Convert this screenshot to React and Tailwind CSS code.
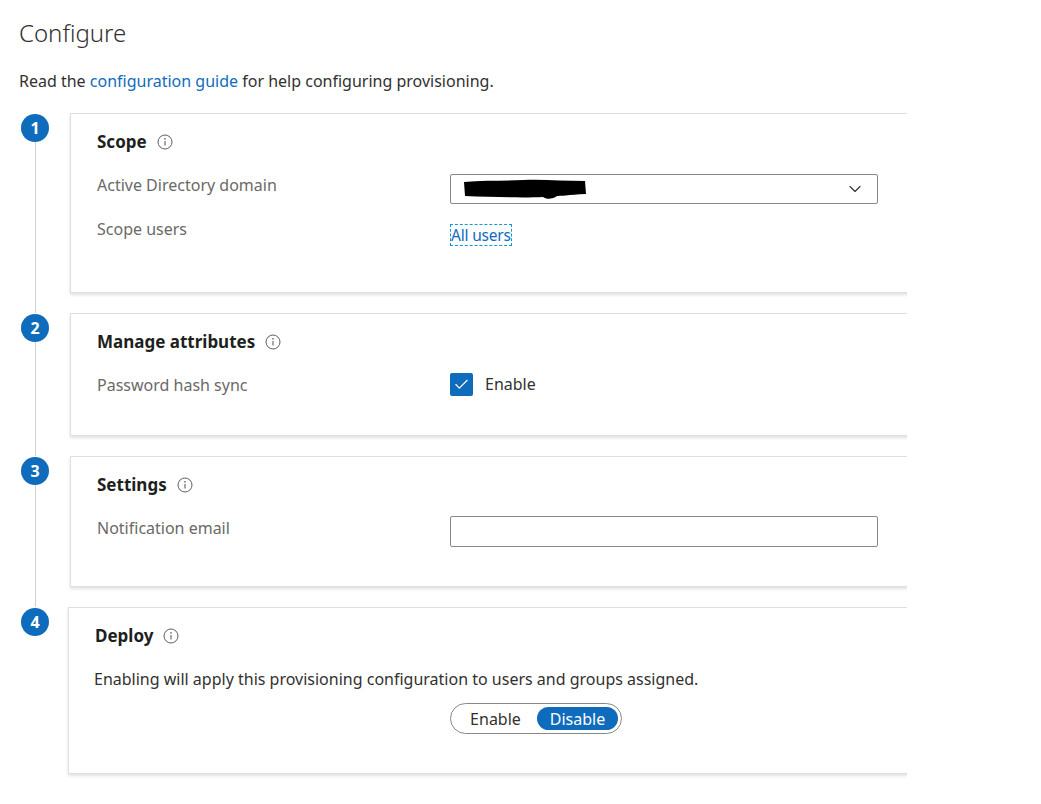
import { Check, ChevronDown } from "lucide-react";

const font = { fontFamily: '"Noto Sans", "Open Sans", sans-serif' };

function Info() {
  return (
    <svg width="16" height="16" viewBox="0 0 16 16" className="text-[#605e5c]">
      <circle cx="8" cy="8" r="7" fill="none" stroke="currentColor" strokeWidth="1" />
      <circle cx="8" cy="4.9" r="0.8" fill="currentColor" />
      <path d="M8 7v4.6" stroke="currentColor" strokeWidth="1.1" />
    </svg>
  );
}

function Step({ n, last, children }) {
  return (
    <div className="flex">
      <div className="w-[70px] shrink-0 flex flex-col items-center">
        <div className="mt-[1px] w-[28px] h-[28px] rounded-full bg-[#0f6cbd] text-white font-bold text-[16px] flex items-center justify-center">
          {n}
        </div>
        {!last && <div className="flex-1 w-px bg-[#d2d0ce]" />}
      </div>
      <div className={last ? "flex-1 pb-[10px]" : "flex-1 pb-[20px]"}>{children}</div>
    </div>
  );
}

function Card({ title, children, className = "" }) {
  return (
    <div
      className={
        "-mr-6 bg-white border border-[#e1dfdd] shadow-[0_2px_3px_rgba(0,0,0,0.12)] pl-[26px] pt-[16px] " +
        className
      }
    >
      <div className="flex items-center gap-[10px] h-[24px]">
        <span className="text-[17px] font-bold text-[#201f1e]">{title}</span>
        <Info />
      </div>
      {children}
    </div>
  );
}

function Row({ label, children }) {
  return (
    <div className="flex items-start">
      <div className="w-[353px] shrink-0 text-[16px] leading-[22px] text-[#6b6967]">{label}</div>
      {children}
    </div>
  );
}

export default function App() {
  return (
    <div className="min-h-screen bg-white text-[#323130]" style={font}>
      <div className="w-[907px] overflow-hidden pt-[16px]">
        <h1 className="ml-[19px] text-[24px] font-light text-[#323130] leading-[34px]">Configure</h1>
        <p className="ml-[19px] mt-[20px] text-[16px] leading-[22px] text-[#323130]">
          Read the <span className="text-[#0f6cbd]">configuration guide</span> for help configuring provisioning.
        </p>

        <div className="mt-[21px] pb-[8px]">
          <Step n="1">
            <Card title="Scope" className="pb-[46px]">
              <div className="mt-[20px]">
                <Row label="Active Directory domain">
                  <div className="w-[428px] h-[30px] border border-[#8a8886] rounded-[2px] flex items-center justify-between pl-[12px] pr-[12px]">
                    <svg width="125" height="24" viewBox="0 0 125 24">
                      <path
                        d="M1 5 C20 3 40 4 60 3 C80 2 100 4 122 4 L123 17 C105 18 97 19 94 19 C90 22 84 23 80 20 C60 21 30 20 2 19 Z"
                        fill="#000"
                      />
                    </svg>
                    <ChevronDown size={20} strokeWidth={1.3} className="text-[#323130]" />
                  </div>
                </Row>
              </div>
              <div className="mt-[14px]">
                <Row label="Scope users">
                  <span className="mt-[6px] border border-dashed border-[#0f9bd7] text-[#0f6cbd] text-[15.5px] leading-[20px] tracking-[-0.2px]">
                    All users
                  </span>
                </Row>
              </div>
            </Card>
          </Step>

          <Step n="2">
            <Card title="Manage attributes" className="pb-[39px]">
              <div className="mt-[20px]">
                <Row label="Password hash sync">
                  <div className="flex items-center gap-[12px] -mt-[2px]">
                    <div className="w-[23px] h-[23px] rounded-[2px] bg-[#0f6cbd] flex items-center justify-center">
                      <Check size={17} strokeWidth={1.6} className="text-white" />
                    </div>
                    <span className="text-[16px] text-[#323130]">Enable</span>
                  </div>
                </Row>
              </div>
            </Card>
          </Step>

          <Step n="3">
            <Card title="Settings" className="pb-[39px]">
              <div className="mt-[20px]">
                <Row label="Notification email">
                  <div className="w-[428px] h-[31px] -mt-[1px] border border-[#8a8886] rounded-[2px]" />
                </Row>
              </div>
            </Card>
          </Step>

          <Step n="4" last>
            <div className="-ml-[2px]">
              <Card title="Deploy" className="pb-[39px]">
                <p className="mt-[20px] -ml-[1px] text-[16px] leading-[22px] text-[#323130]">
                  Enabling will apply this provisioning configuration to users and groups assigned.
                </p>
                <div className="mt-[13px] ml-[355px] w-[172px] h-[31px] rounded-full border border-[#8a8886] flex items-center p-[3px]">
                  <span className="flex-1 text-center text-[16px] text-[#323130]">Enable</span>
                  <span className="w-[81px] h-[23px] rounded-full bg-[#0f6cbd] text-white text-[16px] flex items-center justify-center">
                    Disable
                  </span>
                </div>
              </Card>
            </div>
          </Step>
        </div>
      </div>
    </div>
  );
}
